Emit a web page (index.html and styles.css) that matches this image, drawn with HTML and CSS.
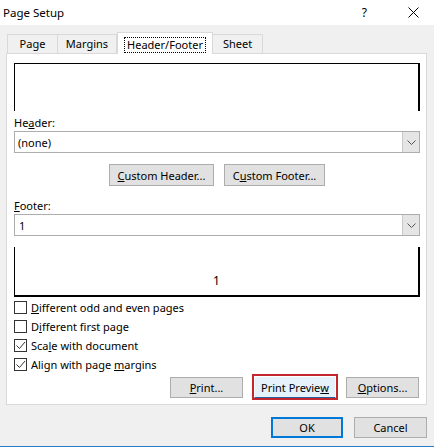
FILE: index.html
```html
<!DOCTYPE html>
<html>
<head>
<meta charset="utf-8">
<link rel="stylesheet" href="styles.css">
</head>
<body>
<div class="dialog">
  <div class="titlebar">
    <span class="title">Page Setup</span>
    <span class="help">?</span>
    <span class="close"><svg width="11" height="11" viewBox="0 0 11 11"><path d="M0.5 0.5L10.5 10.5M10.5 0.5L0.5 10.5" stroke="#000" stroke-width="1"/></svg></span>
  </div>
  <div class="tabs">
    <div class="tab tab-page">Page</div>
    <div class="tab tab-margins">Margins</div>
    <div class="tab tab-active"><span class="focus">Header/Footer</span></div>
    <div class="tab tab-sheet">Sheet</div>
  </div>
  <div class="panel">
    <div class="preview preview-header"></div>
    <div class="label label-header">He<u>a</u>der:</div>
    <div class="combo">
      <span class="combo-text">(none)</span>
      <span class="combo-btn"><svg width="9" height="5" viewBox="0 0 9 5"><path d="M0.5 0.5L4.5 4.5L8.5 0.5" fill="none" stroke="#555" stroke-width="1"/></svg></span>
    </div>
    <div class="custom-row">
      <div class="btn btn-custom-h"><u>C</u>ustom Header...</div>
      <div class="btn btn-custom-f">C<u>u</u>stom Footer...</div>
    </div>
    <div class="label label-footer"><u>F</u>ooter:</div>
    <div class="combo">
      <span class="combo-text combo-text-1">1</span>
      <span class="combo-btn"><svg width="9" height="5" viewBox="0 0 9 5"><path d="M0.5 0.5L4.5 4.5L8.5 0.5" fill="none" stroke="#555" stroke-width="1"/></svg></span>
    </div>
    <div class="preview preview-footer"><span class="page-num">1</span></div>
    <div class="checks">
      <div class="check"><span class="box"></span><span><u>D</u>ifferent odd and even pages</span></div>
      <div class="check"><span class="box"></span><span>D<u>i</u>fferent first page</span></div>
      <div class="check"><span class="box"><svg width="11" height="11" viewBox="0 0 11 11"><path d="M1.5 5.5L4.5 8.5L10 2" fill="none" stroke="#333" stroke-width="1"/></svg></span><span>Sca<u>l</u>e with document</span></div>
      <div class="check"><span class="box"><svg width="11" height="11" viewBox="0 0 11 11"><path d="M1.5 5.5L4.5 8.5L10 2" fill="none" stroke="#333" stroke-width="1"/></svg></span><span>Align with page <u>m</u>argins</span></div>
    </div>
    <div class="action-row">
      <div class="btn btn-print"><u>P</u>rint...</div>
      <div class="ring"><div class="btn btn-preview">Print Previe<u>w</u></div></div>
      <div class="btn btn-options"><u>O</u>ptions...</div>
    </div>
  </div>
  <div class="footer-row">
    <div class="btn btn-ok">OK</div>
    <div class="btn btn-cancel">Cancel</div>
  </div>
</div>
</body>
</html>
```
FILE: styles.css
```css
* { box-sizing: border-box; }
html, body { margin: 0; padding: 0; }
body {
  width: 434px;
  height: 447px;
  background: #f0f0f0;
  font-family: "Noto Sans", "DejaVu Sans", sans-serif;
  font-size: 11px;
  color: #000;
  overflow: hidden;
}
u { text-decoration: underline; text-underline-offset: 1px; }
.dialog {
  width: 434px;
  height: 447px;
  border-bottom: 1px solid #2b7bd0;
}
.titlebar {
  height: 25px;
  background: #fff;
  display: flex;
  align-items: center;
  line-height: 15px;
}
.title { padding-left: 3px; font-size: 11.5px; }
.help { margin-left: auto; margin-right: 41px; font-size: 12px; }
.close { width: 11px; height: 11px; margin-right: 15px; display: flex; }
.tabs {
  display: flex;
  align-items: flex-end;
  height: 28px;
  padding-left: 7px;
  position: relative;
  z-index: 1;
}
.tab {
  height: 19px;
  border: 1px solid #d9d9d9;
  border-bottom: none;
  background: #f0f0f0;
  line-height: 17px;
  text-align: center;
}
.tab + .tab { border-left: none; }
.tab-page { width: 51px; }
.tab-margins { width: 59px; }
.tab-sheet { width: 50px; border-left: none; }
.tab-active {
  width: 96px;
  height: 22px;
  margin-bottom: -1px;
  background: #fff;
  border: 1px solid #d9d9d9;
  border-bottom: none;
  padding-top: 3px;
}
.tab-active + .tab { border-left: none; }
.tab-margins + .tab-active { border-left: 1px solid #d9d9d9; }
.focus {
  display: inline-block;
  border: 1px dotted #000;
  padding: 0 2px;
  line-height: 14px;
}
.panel {
  margin-left: 6px;
  width: 421px;
  height: 352px;
  background: #fff;
  border: 1px solid #d9d9d9;
  padding: 9px 6px 0 7px;
}
.preview { border: 0 solid #000; }
.preview-header {
  height: 48px;
  border-top-width: 1px;
  border-left-width: 1px;
  border-right-width: 2px;
}
.preview-footer {
  height: 50px;
  margin-top: 11px;
  border-left-width: 1px;
  border-right-width: 2px;
  border-bottom-width: 2px;
  display: flex;
  justify-content: center;
  align-items: flex-end;
  padding-bottom: 7px;
  font-size: 12px;
  line-height: 15px;
}
.page-num { color: #000; }
.label { line-height: 15px; padding-bottom: 1px; }
.label-header { padding-top: 4px; }
.label-footer { padding-top: 12px; }
.combo {
  height: 22px;
  border: 1px solid #adadad;
  display: flex;
  align-items: center;
}
.combo-text { padding-left: 3px; line-height: 15px; }
.combo-text-1 { padding-left: 4px; }
.combo-btn {
  margin-left: auto;
  width: 17px;
  height: 20px;
  background: #e5e5e5;
  border-left: 1px solid #c8c8c8;
  display: flex;
  align-items: center;
  justify-content: center;
}
.btn {
  height: 22px;
  background: #e1e1e1;
  border: 1px solid #adadad;
  display: flex;
  align-items: center;
  justify-content: center;
  line-height: 15px;
}
.custom-row {
  margin-top: 11px;
  display: flex;
  justify-content: center;
  gap: 10px;
}
.btn-custom-h { width: 105px; }
.btn-custom-f { width: 101px; }
.checks { margin-top: 1px; }
.check {
  height: 19px;
  display: flex;
  align-items: center;
  line-height: 15px;
}
.box {
  width: 13px;
  height: 13px;
  border: 1px solid #333;
  background: #fff;
  margin-right: 4px;
  display: flex;
  align-items: center;
  justify-content: center;
}
.action-row {
  height: 26px;
  display: flex;
  justify-content: flex-end;
  align-items: center;
  padding-right: 1px;
}
.btn-print { width: 73px; height: 21px; margin-right: 9px; }
.ring {
  border: 2px solid #c4262e;
  padding: 0;
  margin-right: 8px;
}
.btn-preview {
  width: 82px;
  height: 22px;
  background: #e5f1fb;
  border: 1px solid #fff;
  border-bottom: 1px solid #2a5d9a;
}
.btn-options { width: 73px; height: 21px; }
.footer-row {
  margin-top: 12px;
  display: flex;
  justify-content: flex-end;
  gap: 11px;
  padding-right: 7px;
}
.btn-ok { width: 72px; height: 21px; border: 2px solid #0078d7; }
.btn-cancel { width: 73px; height: 21px; }
```
